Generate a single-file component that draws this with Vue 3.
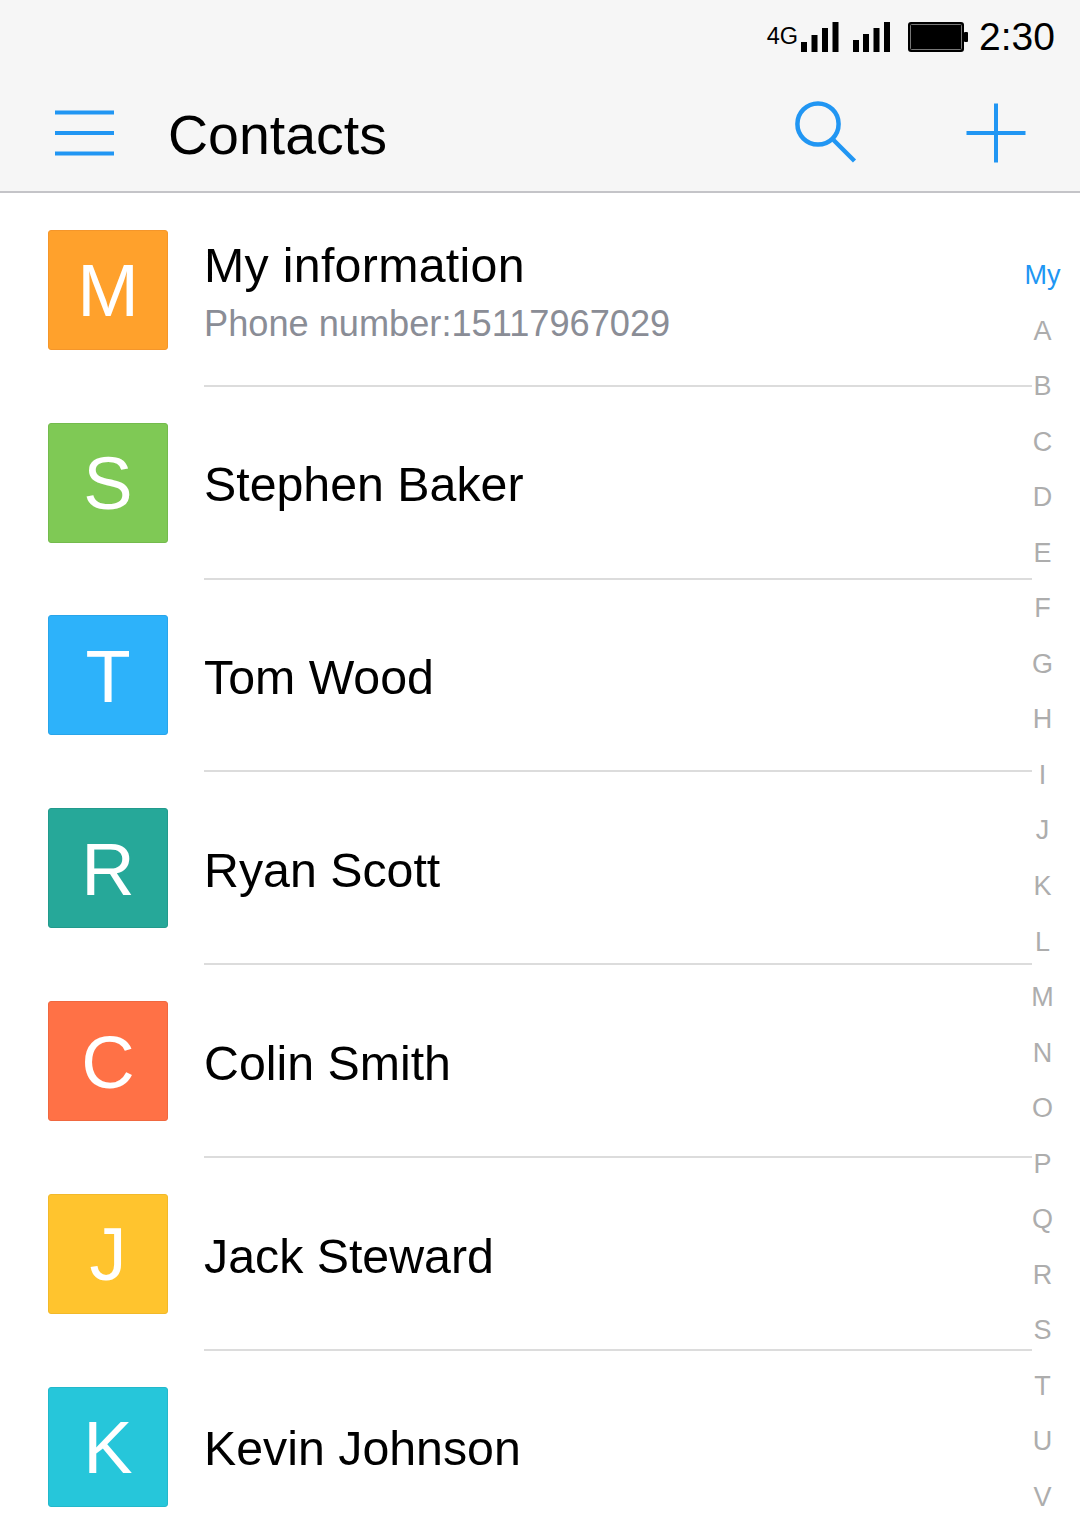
<script setup>
const contacts = [
  { letter: 'M', color: '#ffa12c', edge: '#f5962a', name: 'My information', sub: 'Phone number:15117967029' },
  { letter: 'S', color: '#7fc955', edge: '#74bb4d', name: 'Stephen Baker' },
  { letter: 'T', color: '#2db2fa', edge: '#29a5ea', name: 'Tom Wood' },
  { letter: 'R', color: '#26a899', edge: '#229a8c', name: 'Ryan Scott' },
  { letter: 'C', color: '#ff7146', edge: '#f06840', name: 'Colin Smith' },
  { letter: 'J', color: '#ffc42e', edge: '#f2b92a', name: 'Jack Steward' },
  { letter: 'K', color: '#26c6da', edge: '#23b8cb', name: 'Kevin Johnson' }
]
const index = ['A','B','C','D','E','F','G','H','I','J','K','L','M','N','O','P','Q','R','S','T','U','V']
</script>

<template>
  <div class="page">
    <header class="top">
      <div class="status">
        <span class="net">4G</span>
        <svg class="bars first" width="38" height="32" viewBox="0 0 38 32"><path d="M0 22h6v10H0zM10.500 15h6v17h-6zM21 8h6v24h-6zM31.500 2h6v30h-6z" fill="#000"/></svg>
        <svg class="bars second" width="38" height="32" viewBox="0 0 38 32"><path d="M1 20h6v12H1zM11 14h6v18h-6zM21.500 8h6v24h-6zM32 2h6v30h-6z" fill="#000"/></svg>
        <svg class="battery" width="60" height="32" viewBox="0 0 60 32"><rect x="0" y="2" width="56" height="30" rx="3" fill="#000"/><rect x="2.500" y="4.500" width="51" height="25" rx="1" fill="none" stroke="#777" stroke-width="1"/><rect x="56" y="12" width="4" height="10" rx="1" fill="#000"/></svg>
        <span class="time">2:30</span>
      </div>
      <div class="bar">
        <svg class="menu" width="59" height="46" viewBox="0 0 59 46"><path d="M0 2.500h59M0 23h59M0 43.500h59" stroke="#2196f3" stroke-width="4" fill="none"/></svg>
        <h1 class="title">Contacts</h1>
        <svg class="search" width="64" height="64" viewBox="0 0 64 64"><circle cx="24" cy="24" r="20.600" stroke="#2196f3" stroke-width="4.500" fill="none"/><path d="M39.500 40l21 21" stroke="#2196f3" stroke-width="4.500" fill="none"/></svg>
        <svg class="plus" width="60" height="60" viewBox="0 0 60 60"><path d="M0.500 30h59M30 0.500v59" stroke="#2196f3" stroke-width="4" fill="none"/></svg>
      </div>
    </header>

    <ul class="list">
      <li v-for="c in contacts" :key="c.name" class="row">
        <div class="avatar" :style="{ backgroundColor: c.color, borderColor: c.edge }"><span class="initial">{{ c.letter }}</span></div>
        <div class="body">
          <div class="name" :class="{ stacked: c.sub }">{{ c.name }}</div>
          <div v-if="c.sub" class="sub">{{ c.sub }}</div>
        </div>
      </li>
    </ul>

    <nav class="index">
      <span class="idx active">My</span>
      <span v-for="l in index" :key="l" class="idx">{{ l }}</span>
    </nav>
  </div>
</template>

<style>
html, body { margin: 0; background: #fff; }
</style>

<style scoped>
.page {
  position: relative;
  width: 1080px;
  height: 1532px;
  overflow: hidden;
  background: #fff;
  font-family: "Liberation Sans", Arial, sans-serif;
  color: #000;
}
.top {
  height: 191px;
  background: #f6f6f6;
  border-bottom: 2px solid #c4c4c8;
  box-sizing: content-box;
}
.status {
  height: 72px;
  display: flex;
  align-items: center;
  justify-content: flex-end;
  padding-right: 25px;
}
.net { font-size: 23.500px; }
.bars { margin-left: 3px; }
.bars.second { margin-left: 13px; }
.battery { margin-left: 18px; }
.time { font-size: 39px; margin-left: 11px; margin-top: 1px; }
.bar {
  height: 119px;
  display: flex;
  align-items: center;
  padding-left: 55px;
}
.menu { margin-top: 2px; }
.title {
  margin: 8px 0 0 54px;
  font-size: 55.500px;
  font-weight: 400;
  flex: 1;
  line-height: 1;
}
.search { margin-right: 108px; margin-top: 1px; }
.plus { margin-right: 54px; margin-top: 2px; }
.list {
  list-style: none;
  margin: 0.850px 0 0;
  padding: 0;
}
.row {
  height: 192.830px;
  display: flex;
  align-items: center;
  padding-left: 48px;
  box-sizing: border-box;
  gap: 36px;
}
.avatar {
  width: 120px;
  height: 120px;
  margin-top: -1px;
  box-sizing: border-box;
  border: 1px solid;
  border-radius: 3px;
  color: #fff;
  font-size: 74px;
  display: flex;
  align-items: center;
  justify-content: center;
  flex: none;
}
.initial { margin-top: 3px; line-height: 1; }
.body {
  width: 828px;
  height: 100%;
  box-sizing: border-box;
  padding-top: 4.500px;
  border-bottom: 2px solid #dcdcdc;
  display: flex;
  flex-direction: column;
  justify-content: center;
}
.name { font-size: 48.300px; line-height: 56px; }
.name.stacked { margin-top: -2px; letter-spacing: 0.3px; }
.sub { font-size: 36.200px; line-height: 42px; color: #8a8d96; margin-top: 10px; }
.index {
  position: absolute;
  top: 248px;
  right: 0;
  width: 75px;
  display: flex;
  flex-direction: column;
  align-items: center;
}
.idx {
  height: 55.550px;
  line-height: 55.550px;
  font-size: 27px;
  color: #adadad;
}
.idx.active { color: #2196f3; }
</style>
